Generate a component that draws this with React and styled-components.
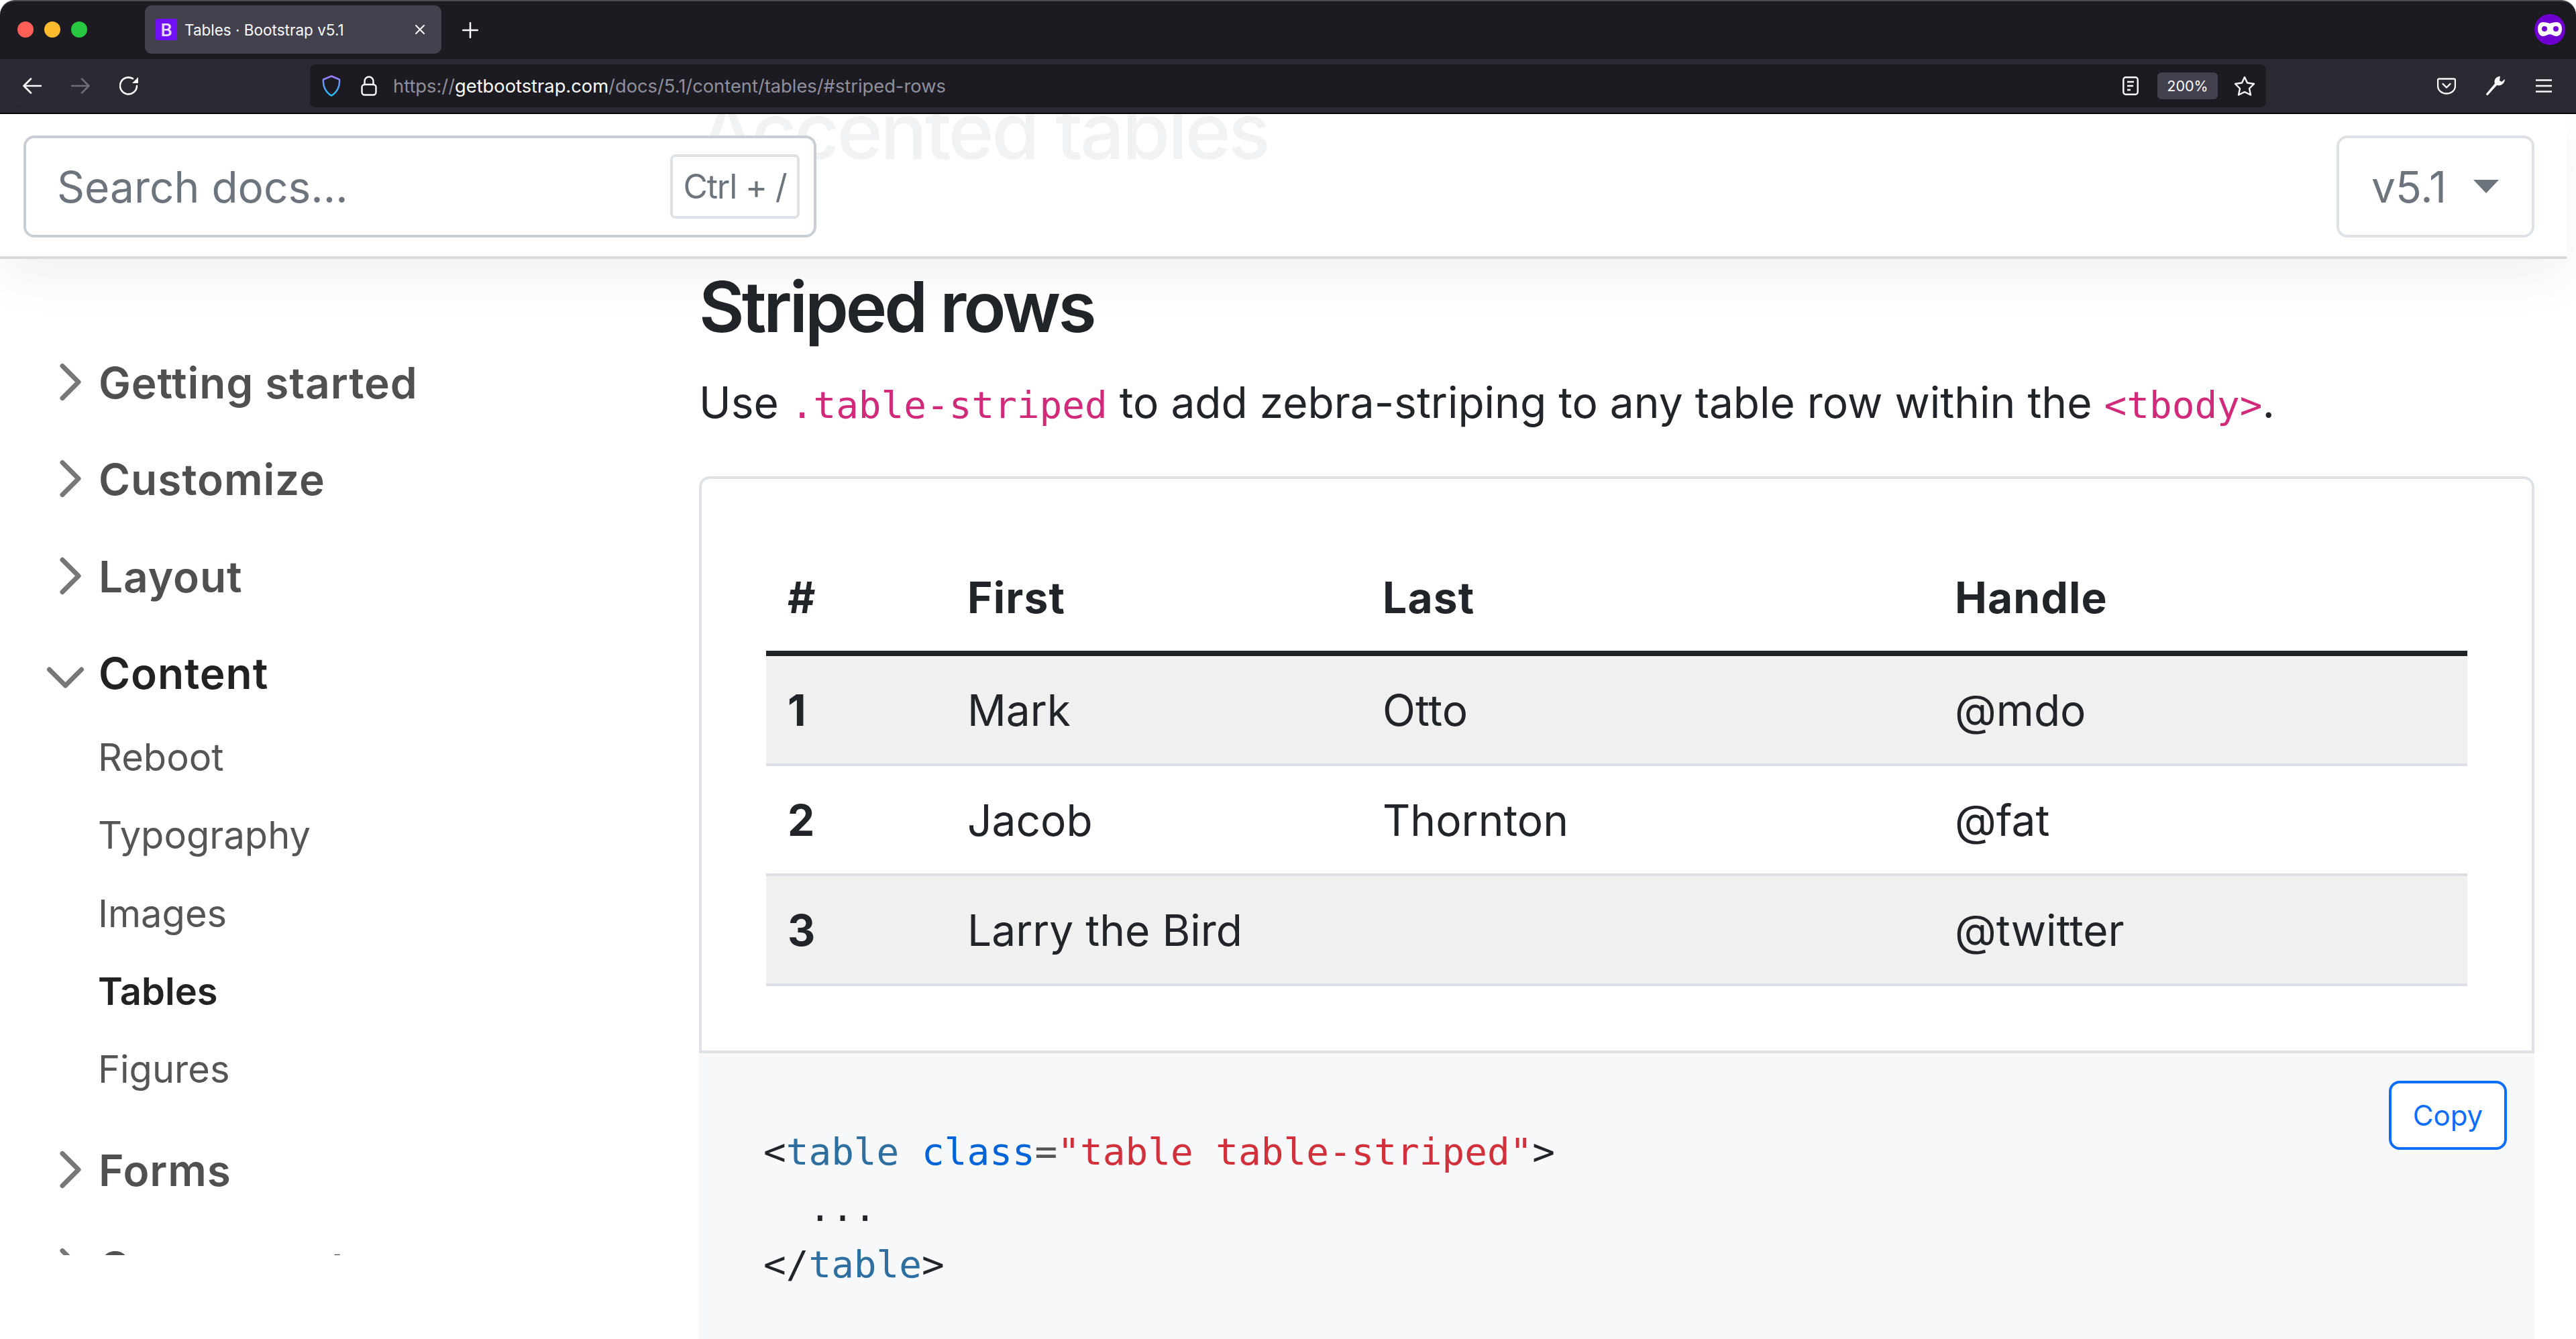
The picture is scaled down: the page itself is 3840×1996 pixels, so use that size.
import React from "react";
import styled, { createGlobalStyle } from "styled-components";

const Global = createGlobalStyle`
  html, body { margin: 0; padding: 0; background: #fff; }
  body { font-family: Inter, "Liberation Sans", sans-serif; color: #212529; }
  * { box-sizing: border-box; }
`;

const Screen = styled.div`
  width: 3840px;
  height: 1996px;
  overflow: hidden;
  display: flex;
  flex-direction: column;
  background: #fff;
`;

/* ---------- browser chrome ---------- */
const TitleBar = styled.div`
  height: 88px;
  flex: none;
  display: flex;
  align-items: flex-start;
  background: #1c1b22;
  border-top: 2px solid #4c4b52;
  border-radius: 22px 22px 0 0;
`;
const Lights = styled.div`
  display: flex;
  gap: 16px;
  margin: 30px 0 0 26px;
`;
const Light = styled.span`
  width: 24px;
  height: 24px;
  border-radius: 50%;
  background: ${(p) => p.$c};
`;
const Tab = styled.div`
  width: 442px;
  height: 72px;
  margin: 6px 0 0 86px;
  padding: 0 16px;
  display: flex;
  align-items: center;
  background: #42414d;
  border-radius: 10px;
  color: #fbfbfe;
  font-size: 22.5px;
`;
const Favicon = styled.span`
  width: 32px;
  height: 32px;
  flex: none;
  display: flex;
  align-items: center;
  justify-content: center;
  margin-right: 11px;
  background: #7010f8;
  border-radius: 3px;
  color: #e8d8ff;
  font-size: 26px;
  font-weight: 600;
`;
const TabTitle = styled.span`
  flex: 1;
  white-space: nowrap;
`;
const ChromeIcon = styled.svg`
  flex: none;
  display: block;
  margin-left: ${(p) => p.$ml || 0}px;
  margin-right: ${(p) => p.$mr || 0}px;
  margin-top: ${(p) => p.$mt || 0}px;
`;
const Toolbar = styled.div`
  height: 82px;
  flex: none;
  display: flex;
  align-items: center;
  background: #2b2a33;
  border-bottom: 2px solid #050505;
`;
const UrlBar = styled.div`
  width: 2916px;
  height: 64px;
  margin-left: 256px;
  padding: 0 16px 0 18px;
  display: flex;
  align-items: center;
  background: #1c1b22;
  border-radius: 8px;
`;
const Url = styled.span`
  margin-left: 24px;
  font-size: 27.3px;
  color: #8f8f9d;
  white-space: nowrap;
`;
const Domain = styled.span`
  color: #fbfbfe;
`;
const Zoom = styled.span`
  width: 90px;
  height: 40px;
  margin: 0 24px 0 28px;
  display: flex;
  align-items: center;
  justify-content: center;
  background: #42414d;
  border-radius: 6px;
  color: #fbfbfe;
  font-size: 21.5px;
`;
const Spring = styled.span`
  flex: 1;
`;

/* ---------- sticky sub navbar ---------- */
const Page = styled.div`
  flex: 1;
  min-height: 0;
  display: flex;
  flex-direction: column;
  position: relative;
`;
const SubNav = styled.header`
  position: relative;
  z-index: 2;
  height: 216px;
  flex: none;
  margin-right: 14px;
  padding: 32px 48px 0 35px;
  display: flex;
  justify-content: space-between;
  align-items: flex-start;
  background: #fff;
  overflow: visible;
  box-shadow: 0 32px 64px rgba(0, 0, 0, 0.05), inset 0 -4px 0 rgba(0, 0, 0, 0.15);
`;
const GhostClip = styled.div`
  position: absolute;
  left: 1043px;
  top: 0;
  height: 80px;
  width: 1000px;
  overflow: hidden;
`;
const Ghost = styled.div`
  margin-top: -37px;
  font-size: 116px;
  line-height: 125px;
  letter-spacing: -3.5px;
  font-weight: 500;
  color: #f1f2f3;
  white-space: nowrap;
`;
const Search = styled.div`
  position: relative;
  width: 1182px;
  height: 152px;
  padding: 0 21px 0 46px;
  display: flex;
  align-items: center;
  justify-content: space-between;
  background: #fff;
  border: 4px solid #c9ced6;
  border-radius: 16px;
  color: #6c757d;
  font-size: 64px;
`;
const Kbd = styled.span`
  width: 193px;
  height: 96px;
  display: flex;
  align-items: center;
  justify-content: center;
  background: #fff;
  border: 4px solid #dee2e6;
  border-radius: 8px;
  font-size: 50px;
  letter-spacing: -1.2px;
`;
const Version = styled.div`
  position: relative;
  width: 295px;
  height: 152px;
  display: flex;
  align-items: center;
  padding-left: 48px;
  background: #fff;
  border: 4px solid #dee2e6;
  border-radius: 16px;
  color: #6c757d;
  font-size: 64px;
`;
const Caret = styled.span`
  margin-left: 40px;
  width: 0;
  height: 0;
  border-left: 19px solid transparent;
  border-right: 19px solid transparent;
  border-top: 20px solid #6c757d;
`;

/* ---------- page body ---------- */
const Body = styled.div`
  flex: 1;
  min-height: 0;
  display: grid;
  grid-template-columns: 1042px 2736px;
`;
const Sidebar = styled.nav`
  height: 1485px;
  overflow: hidden;
  padding-top: 113px;
`;
const Group = styled.div`
  height: ${(p) => p.$h || 144.4}px;
  padding: 24px 0 0 73px;
  display: flex;
  align-items: flex-start;
  font-size: 64px;
  line-height: 96px;
  font-weight: 600;
  letter-spacing: 0.9px;
  color: ${(p) => (p.$open ? "#222" : "#505050")};
`;
const Chevron = styled.svg`
  flex: none;
  margin: 16px 10px 0 0;
  transform: ${(p) => (p.$open ? "translate(-7.5px, 6px) rotate(90deg)" : "translateY(-1.5px)")};
`;
const SubList = styled.ul`
  list-style: none;
  margin: 0 0 24px;
  padding: 0 0 0 146px;
`;
const SubItem = styled.li`
  height: 116.4px;
  padding-top: 13.6px;
  font-size: 56px;
  line-height: 96px;
  font-weight: ${(p) => (p.$active ? 600 : 400)};
  color: ${(p) => (p.$active ? "#222" : "#555")};
`;

const Main = styled.main`
  min-width: 0;
  min-height: 0;
  overflow: hidden;
  padding-top: 9px;
`;
const H3 = styled.h3`
  margin: 0 0 32px;
  font-size: 104px;
  line-height: 125px;
  letter-spacing: -4px;
  font-weight: 560;
  color: #212529;
`;
const Lead = styled.p`
  margin: 0 0 58px;
  font-size: 64px;
  line-height: 96px;
  white-space: nowrap;
`;
const InlineCode = styled.code`
  font-family: "DejaVu Sans Mono", "Liberation Mono", monospace;
  font-size: 56px;
  color: #d12a7a;
`;
const Card = styled.div`
  padding: 96px;
  border: 4px solid #dee2e6;
  border-radius: 16px 16px 0 0;
`;
const Table = styled.table`
  width: 100%;
  table-layout: fixed;
  border-collapse: collapse;
  font-size: 64px;
  line-height: 96px;
`;
const Col = styled.col`
  width: ${(p) => p.$w}px;
`;
const Th = styled.th`
  padding: 33px 32px 31px;
  text-align: left;
  font-weight: 700;
  letter-spacing: 1.2px;
  border-bottom: 8px solid #1f2326;
`;
const Row = styled.tr`
  background: ${(p) => (p.$striped ? "#f0f0f0" : "#fff")};
  border-bottom: 4px solid #dcdfe3;
`;
const Td = styled.td`
  padding: 33px 32px 31px;
  height: 164px;
  font-weight: ${(p) => (p.$head ? 700 : 400)};
`;
const Snippet = styled.div`
  position: relative;
  height: 600px;
  padding: 105px 96px 0;
  background: #f7f8fa;
`;
const Pre = styled.pre`
  margin: 0;
  font-family: "DejaVu Sans Mono", "Liberation Mono", monospace;
  font-size: 56px;
  line-height: 84px;
  color: #212529;
`;
const Tok = styled.span`
  color: ${(p) => p.$c};
`;
const CopyBtn = styled.button`
  position: absolute;
  top: 41px;
  right: 41px;
  width: 176px;
  height: 103px;
  background: #fff;
  border: 4px solid #0d6efd;
  border-radius: 16px;
  color: #0d6efd;
  font-family: inherit;
  font-size: 42px;
`;

const ChevronIcon = ({ open }) => (
  <Chevron $open={open} width="64" height="64" viewBox="0 0 64 64" fill="none">
    <path d="M20 56 L44 32 L20 8" stroke="#777" strokeWidth="7" strokeLinecap="round" strokeLinejoin="round" />
  </Chevron>
);

const line = { fill: "none", stroke: "#fbfbfe", strokeLinecap: "round", strokeLinejoin: "round" };

const rows = [
  ["1", "Mark", "Otto", "@mdo"],
  ["2", "Jacob", "Thornton", "@fat"],
  ["3", "Larry the Bird", "", "@twitter"],
];

export default function App() {
  return (
    <Screen>
      <Global />
      <TitleBar>
        <Lights>
          <Light $c="#ff5f57" />
          <Light $c="#febc2e" />
          <Light $c="#28c840" />
        </Lights>
        <Tab>
          <Favicon>B</Favicon>
          <TabTitle>Tables · Bootstrap v5.1</TabTitle>
          <ChromeIcon width="16" height="16" viewBox="0 0 16 16" $mr="8">
            <path d="M2 2 L14 14 M14 2 L2 14" {...line} strokeWidth="2" />
          </ChromeIcon>
        </Tab>
        <ChromeIcon width="24" height="24" viewBox="0 0 24 24" $ml="31" $mt="31">
          <path d="M12 1 V23 M1 12 H23" {...line} strokeWidth="2.5" />
        </ChromeIcon>
        <ChromeIcon width="46" height="46" viewBox="0 0 46 46" $ml="3065" $mt="19">
          <circle cx="23" cy="23" r="23" fill="#7000d2" />
          <path d="M13 12 C17 12 20 13 23 14 C26 13 29 12 33 12 C38 12 41 16 41 22 C41 29 37 33 33 33 C29 33 26 30 23 30 C20 30 17 33 13 33 C9 33 5 29 5 22 C5 16 8 12 13 12 Z" fill="#fff" />
          <circle cx="15" cy="22" r="4" fill="#7000d2" />
          <circle cx="32" cy="22" r="4" fill="#7000d2" />
        </ChromeIcon>
      </TitleBar>
      <Toolbar>
        <ChromeIcon width="28" height="24" viewBox="0 0 28 24" $ml="34">
          <path d="M27 12 H2 M12 1.5 L1.5 12 L12 22.5" {...line} strokeWidth="2.6" />
        </ChromeIcon>
        <ChromeIcon width="28" height="24" viewBox="0 0 28 24" $ml="44">
          <path d="M1 12 H26 M16 1.5 L26.5 12 L16 22.5" {...line} stroke="#6f6e75" strokeWidth="2.6" />
        </ChromeIcon>
        <ChromeIcon width="28" height="28" viewBox="0 0 28 28" $ml="44">
          <path d="M26 14 A12.5 12.5 0 1 1 20 3.2" {...line} strokeWidth="2.6" />
          <path d="M28 1 V10 H19 Z" fill="#fbfbfe" />
        </ChromeIcon>
        <UrlBar>
          <ChromeIcon width="28" height="32" viewBox="0 0 28 32">
            <defs>
              <linearGradient id="shield" x1="0" y1="0" x2="0" y2="1">
                <stop offset="0" stopColor="#9a7bff" />
                <stop offset="1" stopColor="#1fc2ff" />
              </linearGradient>
            </defs>
            <path d="M14 1.5 L26 6.5 C27 17 22 26 14 30.5 C6 26 1 17 2 6.5 Z" fill="none" stroke="url(#shield)" strokeWidth="2.5" strokeLinejoin="round" />
          </ChromeIcon>
          <ChromeIcon width="24" height="30" viewBox="0 0 24 30" $ml="30">
            <path d="M5.5 13 V8 a6.5 6.5 0 0 1 13 0 V13" {...line} strokeWidth="2.4" />
            <rect x="1.5" y="13" width="21" height="15.5" rx="4" {...line} strokeWidth="2.4" />
          </ChromeIcon>
          <Url>
            https://<Domain>getbootstrap.com</Domain>/docs/5.1/content/tables/#striped-rows
          </Url>
          <Spring />
          <ChromeIcon width="24" height="28" viewBox="0 0 24 28">
            <rect x="1.3" y="1.3" width="21.4" height="25.4" rx="3.5" {...line} strokeWidth="2.4" />
            <path d="M7 8 H17 M7 14 H16 M7 20 H12" {...line} strokeWidth="2.6" strokeLinecap="butt" />
          </ChromeIcon>
          <Zoom>200%</Zoom>
          <ChromeIcon width="32" height="30" viewBox="0 0 32 30">
            <path d="M16 2 L20 10.5 L30 12 L23 19 L25 28.5 L16 24 L7 28.5 L9 19 L2 12 L12 10.5 Z" {...line} strokeWidth="2.4" />
          </ChromeIcon>
        </UrlBar>
        <ChromeIcon width="28" height="25" viewBox="0 0 28 25" $ml="255">
          <path d="M3 1.5 H25 a2 2 0 0 1 2 2 V12 C27 19 21 23.5 14 23.5 C7 23.5 1 19 1 12 V3.5 a2 2 0 0 1 2 -2 Z" {...line} strokeWidth="2.4" />
          <path d="M8.5 9 L14 14.5 L19.5 9" {...line} strokeWidth="2.4" />
        </ChromeIcon>
        <ChromeIcon width="30" height="30" viewBox="0 0 30 30" $ml="44">
          <path d="M22 0.8 C16 1 12 6 14 11.5 L1 27 Q1 29.5 3.5 29 L17 14 C23 16 29 11 29 5 L24 9 L21 7 Z" fill="#fbfbfe" />
        </ChromeIcon>
        <ChromeIcon width="24" height="20" viewBox="0 0 24 20" $ml="45">
          <path d="M0 1.5 H24 M0 10 H24 M0 18.5 H24" fill="none" stroke="#fbfbfe" strokeWidth="2.5" />
        </ChromeIcon>
      </Toolbar>

      <Page>
        <SubNav>
          <GhostClip>
            <Ghost>Accented tables</Ghost>
          </GhostClip>
          <Search>
            Search docs...
            <Kbd>Ctrl + /</Kbd>
          </Search>
          <Version>
            v5.1
            <Caret />
          </Version>
        </SubNav>
        <Body>
          <Sidebar>
            <Group><ChevronIcon />Getting started</Group>
            <Group><ChevronIcon />Customize</Group>
            <Group><ChevronIcon />Layout</Group>
            <Group $open $h={135}><ChevronIcon open />Content</Group>
            <SubList>
              <SubItem>Reboot</SubItem>
              <SubItem>Typography</SubItem>
              <SubItem>Images</SubItem>
              <SubItem $active>Tables</SubItem>
              <SubItem>Figures</SubItem>
            </SubList>
            <Group><ChevronIcon />Forms</Group>
            <Group><ChevronIcon />Components</Group>
          </Sidebar>
          <Main>
            <H3>Striped rows</H3>
            <Lead>
              Use <InlineCode>.table-striped</InlineCode> to add zebra-striping to any table row within the{" "}
              <InlineCode>&lt;tbody&gt;</InlineCode>.
            </Lead>
            <Card>
              <Table>
                <colgroup>
                  <Col $w={268} />
                  <Col $w={619} />
                  <Col $w={853} />
                  <Col $w={796} />
                </colgroup>
                <thead>
                  <tr>
                    <Th>#</Th>
                    <Th>First</Th>
                    <Th>Last</Th>
                    <Th>Handle</Th>
                  </tr>
                </thead>
                <tbody>
                  {rows.map((r, i) => (
                    <Row key={r[0]} $striped={i % 2 === 0}>
                      <Td $head>{r[0]}</Td>
                      <Td>{r[1]}</Td>
                      <Td>{r[2]}</Td>
                      <Td>{r[3]}</Td>
                    </Row>
                  ))}
                </tbody>
              </Table>
            </Card>
            <Snippet>
              <CopyBtn>Copy</CopyBtn>
              <Pre>
                &lt;<Tok $c="#2f6f9f">table</Tok> <Tok $c="#0064d9">class</Tok>
                <Tok $c="#555">=</Tok>
                <Tok $c="#d1313a">"table table-striped"</Tok>&gt;{"\n"}
                {"  ...\n"}
                &lt;/<Tok $c="#2f6f9f">table</Tok>&gt;
              </Pre>
            </Snippet>
          </Main>
        </Body>
      </Page>
    </Screen>
  );
}
